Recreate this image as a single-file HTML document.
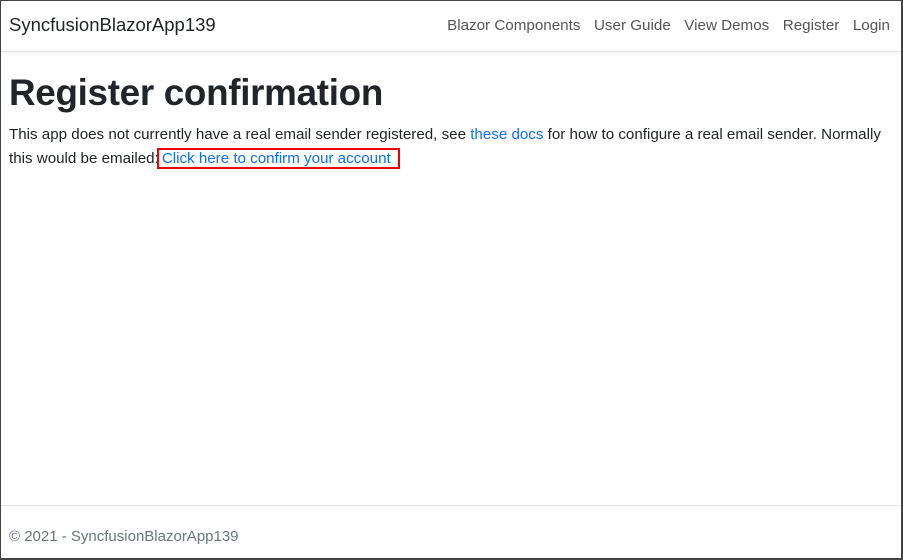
<!DOCTYPE html>
<html><head><meta charset="utf-8"><style>
html,body{margin:0;padding:0}
body{width:903px;height:560px;box-sizing:border-box;border:1px solid #444;border-right-width:2px;border-bottom-width:2px;position:relative;font-family:"Liberation Sans",sans-serif;color:#212529;background:#fff;overflow:hidden}
.nav{height:50px;border-bottom:1px solid #e5e5e5;box-shadow:0 2px 4px rgba(0,0,0,.05);position:relative}
.brand{position:absolute;left:8px;top:13px;font-size:18.5px;color:#212529}
.links{position:absolute;right:11px;top:16px;font-size:15.2px;color:#555}
.links span{margin-left:13.5px}
h1{position:absolute;left:8px;top:71px;margin:0;font-size:36.8px;font-weight:bold;letter-spacing:-0.3px;color:#212529}
p{position:absolute;left:8px;top:122px;margin:0;width:890px;font-size:15.15px;line-height:23.5px}
a{color:#0d6efd;text-decoration:none}
.box{outline:2.5px solid #e00;outline-offset:0;padding:0 7px 0 3px}
.foot{position:absolute;left:0;right:0;top:504px;border-top:1px solid #e5e5e5}
.foot div{position:absolute;left:8px;top:22px;font-size:15px;color:#6c757d}
</style></head><body>
<div class="nav"><div class="brand">SyncfusionBlazorApp139</div>
<div class="links"><span>Blazor Components</span><span>User Guide</span><span>View Demos</span><span>Register</span><span>Login</span></div></div>
<h1>Register confirmation</h1>
<p>This app does not currently have a real email sender registered, see <a>these docs</a> for how to configure a real email sender. Normally this would be emailed:<a class="box">Click here to confirm your account</a></p>
<div class="foot"><div>© 2021 - SyncfusionBlazorApp139</div></div>
</body></html>
